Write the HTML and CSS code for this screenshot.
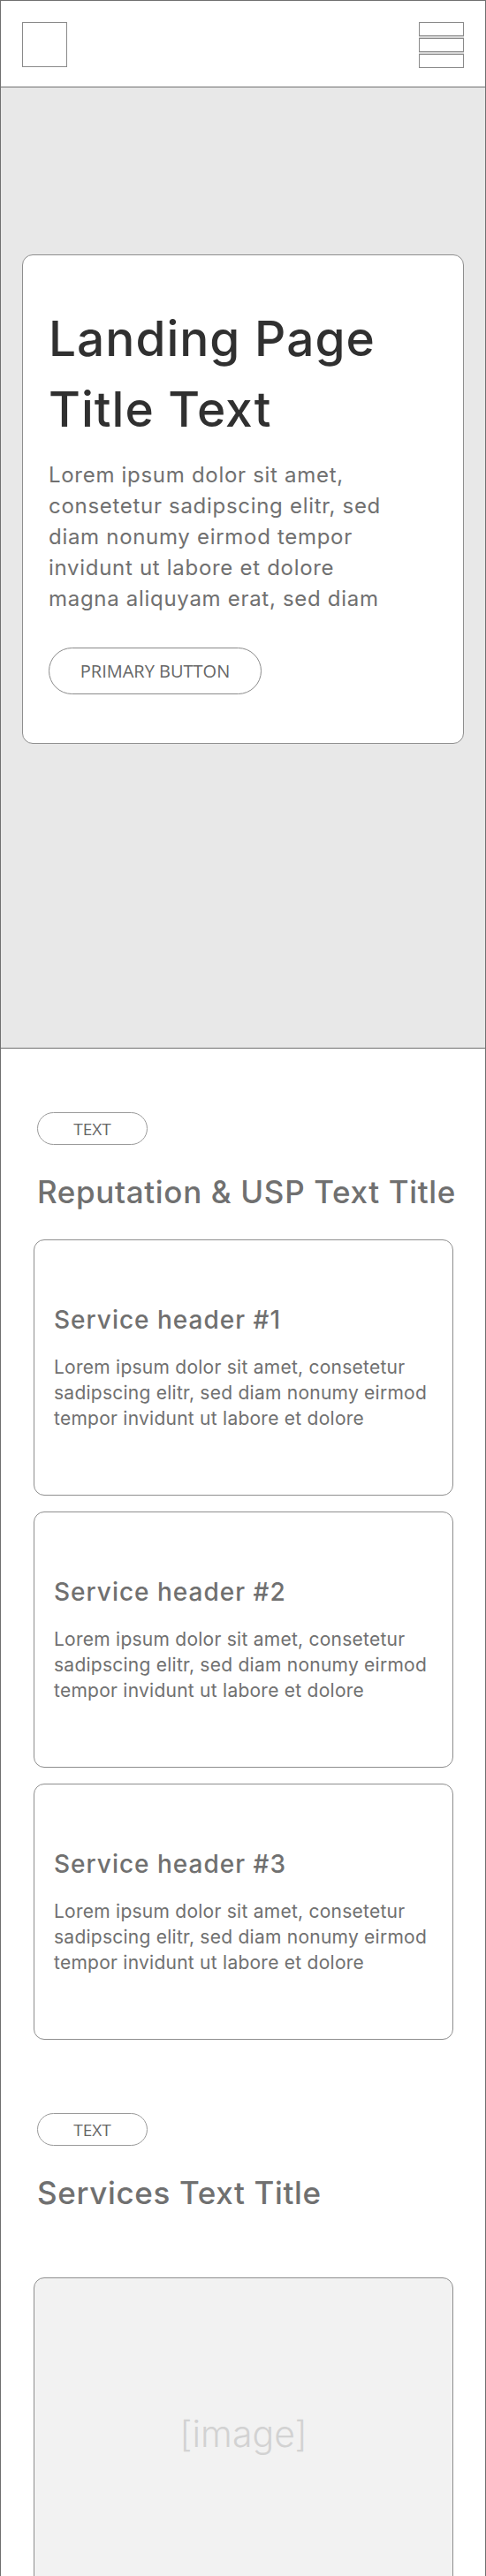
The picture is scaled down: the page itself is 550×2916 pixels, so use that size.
FILE: index.html
```html
<!DOCTYPE html>
<html lang="en">
<head>
<meta charset="utf-8">
<title>Landing Page Wireframe</title>
<link rel="stylesheet" href="styles.css">
</head>
<body>
<div class="page">
  <header class="topbar">
    <div class="logo"></div>
    <div class="menu"><span></span><span></span><span></span></div>
  </header>

  <section class="hero">
    <div class="hero-card">
      <h1 class="hero-title">Landing Page<br>Title Text</h1>
      <p class="hero-text">Lorem ipsum dolor sit amet, consetetur sadipscing elitr, sed diam nonumy eirmod tempor invidunt ut labore et dolore magna aliquyam erat, sed diam</p>
      <a class="btn" href="#">PRIMARY BUTTON</a>
    </div>
  </section>

  <section class="usp">
    <span class="pill">TEXT</span>
    <h2 class="section-title">Reputation &amp; USP Text Title</h2>
    <div class="cards">
      <div class="service-card">
        <h3 class="service-title">Service header #1</h3>
        <p class="service-text">Lorem ipsum dolor sit amet, consetetur sadipscing elitr, sed diam nonumy eirmod tempor invidunt ut labore et dolore</p>
      </div>
      <div class="service-card">
        <h3 class="service-title">Service header #2</h3>
        <p class="service-text">Lorem ipsum dolor sit amet, consetetur sadipscing elitr, sed diam nonumy eirmod tempor invidunt ut labore et dolore</p>
      </div>
      <div class="service-card">
        <h3 class="service-title">Service header #3</h3>
        <p class="service-text">Lorem ipsum dolor sit amet, consetetur sadipscing elitr, sed diam nonumy eirmod tempor invidunt ut labore et dolore</p>
      </div>
    </div>
  </section>

  <section class="services">
    <span class="pill">TEXT</span>
    <h2 class="section-title">Services Text Title</h2>
    <div class="image-box">[image]</div>
  </section>
</div>
</body>
</html>
```
FILE: styles.css
```css
* { box-sizing: border-box; }

html, body {
  margin: 0;
  padding: 0;
  background: #ffffff;
}

body {
  font-family: "Inter", "Liberation Sans", sans-serif;
  color: #707070;
}

.page {
  width: 550px;
  border: 1px solid #707070;
  border-bottom: none;
  background: #ffffff;
}

/* Header */
.topbar {
  height: 98px;
  border-bottom: 1px solid #707070;
  display: flex;
  justify-content: space-between;
  align-items: flex-start;
  padding: 24px 24px 0 24px;
}

.logo {
  width: 51px;
  height: 51px;
  border: 1px solid #8a8a8a;
}

.menu {
  width: 51px;
  display: flex;
  flex-direction: column;
  gap: 2px;
}

.menu span {
  display: block;
  height: 16px;
  border: 1px solid #8a8a8a;
  box-shadow: 0 2px 0 #d6d6d6;
}

.menu span:last-child { box-shadow: none; }

/* Hero */
.hero {
  height: 1088px;
  background: #e8e8e8;
  border-bottom: 1px solid #707070;
  padding: 189px 24px 0 24px;
}

.hero-card {
  background: #ffffff;
  border: 1px solid #8e8e8e;
  border-radius: 12px;
  padding: 54px 30px 55px 29px;
}

.hero-title {
  margin: 0;
  font-size: 55px;
  line-height: 80px;
  font-weight: 500;
  letter-spacing: 1px;
  color: #303030;
}

.hero-text {
  margin: 17px 0 0 0;
  font-size: 24px;
  line-height: 35px;
  letter-spacing: 0.7px;
  color: #707070;
  max-width: 395px;
}

.btn {
  margin-top: 38px;
  display: flex;
  align-items: center;
  justify-content: center;
  width: 241px;
  height: 53px;
  border: 1px solid #8a8a8a;
  border-radius: 27px;
  font-family: "Open Sans", "Liberation Sans", sans-serif;
  font-size: 20px;
  color: #666666;
  text-decoration: none;
}

/* Sections */
.usp {
  padding: 72px 36px 0 37px;
}

.services {
  padding: 83px 36px 0 37px;
}

.pill {
  margin-left: 4px;
  display: flex;
  align-items: center;
  justify-content: center;
  width: 125px;
  height: 37px;
  border: 1px solid #9a9a9a;
  border-radius: 19px;
  font-family: "Open Sans", "Liberation Sans", sans-serif;
  font-size: 19px;
  color: #666666;
}

.section-title {
  margin: 31px 0 0 4px;
  font-size: 35px;
  line-height: 44px;
  font-weight: 500;
  letter-spacing: 0.65px;
  color: #707070;
  white-space: nowrap;
}

.cards {
  margin-top: 32px;
  display: flex;
  flex-direction: column;
  gap: 18px;
}

.service-card {
  height: 290px;
  border: 1px solid #8e8e8e;
  border-radius: 12px;
  padding: 0 10px 0 22px;
  display: flex;
  flex-direction: column;
  justify-content: center;
}

.service-title {
  margin: 0;
  font-size: 28px;
  line-height: 36px;
  font-weight: 500;
  letter-spacing: 1px;
  color: #707070;
}

.service-text {
  margin: 21px 0 0 0;
  font-size: 21px;
  line-height: 29px;
  letter-spacing: 0.25px;
  color: #707070;
}

.image-box {
  margin-top: 74px;
  height: 354px;
  background: #f2f2f2;
  border: 1px solid #8e8e8e;
  border-radius: 12px;
  display: flex;
  align-items: center;
  justify-content: center;
  font-size: 41px;
  font-weight: 300;
  color: #d2d2d2;
}
```
